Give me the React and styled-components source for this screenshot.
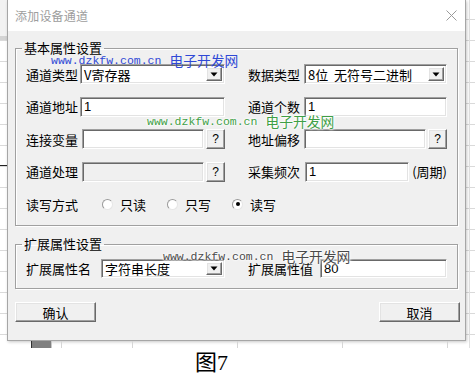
import React from 'react';
import styled, { createGlobalStyle } from 'styled-components';

const GlobalStyle = createGlobalStyle`
  html, body { margin: 0; padding: 0; background: #fff; }
  body { font-family: "Noto Sans CJK SC", "Liberation Sans", sans-serif; color: #000; }
`;

const Page = styled.div`
  width: 475px;
  height: 380px;
  overflow: hidden;
  display: flex;
  flex-direction: column;
`;

// spreadsheet behind the dialog
const Desk = styled.div`
  height: 348px;
  flex: none;
  display: flex;
  flex-direction: column;
  background:
    linear-gradient(#f2f2f2, #f2f2f2) 0 0 / 7px 36px no-repeat,
    linear-gradient(#d4d4d4, #d4d4d4) 0 36px / 7px 4px no-repeat,
    linear-gradient(#222, #222) 0 165px / 7px 1px no-repeat,
    linear-gradient(90deg, transparent 469px, #e0e0e0 469px, #e0e0e0 470px, transparent 470px),
    repeating-linear-gradient(180deg, transparent 0 19px, #dadada 19px 20px, transparent 20px 21px),
    #fff;
`;

const Dialog = styled.div`
  margin-left: 7px;
  width: 459px;
  height: 341px;
  box-sizing: border-box;
  flex: none;
  background: #f0f0f0;
  border: 1px solid #a6a6a6;
  border-top: none;
  box-shadow: 1px 1px 3px rgba(0, 0, 0, 0.22);
  display: flex;
  flex-direction: column;
`;

const TitleBar = styled.div`
  height: 31px;
  flex: none;
  background: #fff;
  display: flex;
  align-items: center;
  justify-content: space-between;
  padding: 0 8px 0 7px;
`;

const Title = styled.span`
  font-size: 12px;
  color: #9d9d9d;
  letter-spacing: 0.2px;
`;

const Body = styled.div`
  position: relative;
  flex: 1;
  padding: 9px 7px 0;
`;

const Group = styled.fieldset`
  margin: ${(p) => p.$top || 0}px 0 0;
  padding: ${(p) => p.$pad};
  min-width: 0;
  border: 1px solid #a0a0a0;
  box-shadow: 1px 1px 0 #fff, inset 1px 1px 0 #fff;
`;

const Legend = styled.legend`
  margin-left: -4px;
  padding: 0 2px;
  font-size: 13px;
  line-height: 16px;
`;

const FieldGrid = styled.div`
  display: grid;
  grid-template-columns: 199px 199px;
  column-gap: 23px;
  row-gap: 12.5px;
  grid-auto-rows: ${(p) => p.$row}px;
`;

const Field = styled.div`
  display: flex;
  align-items: center;
  gap: ${(p) => p.$gap || 0}px;
  grid-column: ${(p) => (p.$wide ? '1 / -1' : 'auto')};
  min-width: 0;
`;

const Label = styled.span`
  width: ${(p) => p.$w}px;
  flex: none;
  font-size: 13px;
  white-space: nowrap;
`;

const Sunken = `
  box-sizing: border-box;
  border: 1px solid;
  border-color: #a0a0a0 #fff #fff #a0a0a0;
  box-shadow: inset 1px 1px 0 #696969, inset -1px -1px 0 #e3e3e3;
`;

const TextBox = styled.input`
  ${Sunken}
  flex: 1;
  min-width: 0;
  height: 100%;
  margin: 0;
  padding: 0 3px;
  font: 13px "Liberation Sans", "Noto Sans CJK SC", sans-serif;
  color: #000;
  background: ${(p) => (p.$disabled ? '#f0f0f0' : '#fff')};
  outline: none;
`;

const Select = styled.div`
  ${Sunken}
  flex: 1;
  height: 100%;
  display: flex;
  align-items: center;
  padding: 2px;
  background: #fff;
`;

const SelectText = styled.span`
  flex: 1;
  font-size: 13px;
  padding-left: 1px;
  white-space: pre;
`;

const Raised = `
  box-sizing: border-box;
  border: 1px solid;
  border-color: #fff #696969 #696969 #fff;
  box-shadow: inset -1px -1px 0 #a0a0a0, inset 1px 1px 0 #e3e3e3;
  background: #f0f0f0;
`;

const DropButton = styled.span`
  ${Raised}
  width: 16px;
  height: 100%;
  flex: none;
  display: flex;
  align-items: center;
  justify-content: center;
`;

const HelpButton = styled.button`
  ${Raised}
  width: 19px;
  height: 100%;
  flex: none;
  margin: 0;
  padding: 0;
  font: 12px "Liberation Sans", sans-serif;
  color: #000;
`;

const Unit = styled.span`
  font-size: 13px;
  white-space: nowrap;
`;

const Radios = styled.div`
  display: flex;
  align-items: center;
  gap: 21px;
  margin-left: 22px;
`;

const RadioItem = styled.label`
  display: flex;
  align-items: center;
  gap: 7px;
  font-size: 13px;
`;

const RadioDot = styled.span`
  width: 11px;
  height: 11px;
  box-sizing: border-box;
  border-radius: 50%;
  border: 1px solid;
  border-color: #9a9a9a #e6e6e6 #e6e6e6 #9a9a9a;
  background: #fff;
  display: flex;
  align-items: center;
  justify-content: center;
  &::after {
    content: '';
    width: 4px;
    height: 4px;
    border-radius: 50%;
    background: ${(p) => (p.$on ? '#000' : 'transparent')};
  }
`;

const ButtonRow = styled.div`
  display: flex;
  justify-content: space-between;
  margin: 13px -2px 0 0;
`;

const DialogButton = styled.button`
  ${Raised}
  width: 81px;
  height: 20px;
  margin: 0;
  padding: 0;
  font: 13px "Noto Sans CJK SC", sans-serif;
  color: #000;
`;

const Watermark = styled.div`
  position: absolute;
  left: ${(p) => p.$x}px;
  top: ${(p) => p.$y}px;
  display: flex;
  align-items: center;
  gap: 8px;
  color: ${(p) => p.$color};
  line-height: 14px;
  white-space: nowrap;
  pointer-events: none;
  text-shadow: ${(p) =>
    p.$halo ? '0 0 2px #fff, 0 0 2px #fff, 0 0 3px #fff, 0 0 4px #fff' : 'none'};
`;

const MarkUrl = styled.span`
  font: 11.5px "Liberation Mono", monospace;
`;

const MarkName = styled.span`
  font-size: 13.8px;
`;

const CellStrip = styled.div`
  flex: 1;
  display: flex;
`;

const Cell = styled.div`
  width: ${(p) => p.$w}px;
  flex: none;
  box-sizing: border-box;
  background: ${(p) => p.$fill || 'transparent'};
  border-right: 1px solid ${(p) => p.$line || '#d6d6d6'};
`;

const Caption = styled.div`
  padding-left: 195px;
  margin-top: 3px;
  font: 22px/24px "Liberation Serif", "Noto Sans CJK SC", serif;
`;

const Triangle = () => (
  <svg width="8" height="5" viewBox="0 0 8 5">
    <polygon points="0.5,0.5 7.5,0.5 4,4.5" fill="#000" />
  </svg>
);

const CloseIcon = () => (
  <svg width="11" height="11" viewBox="0 0 11 11">
    <path d="M0.5 0.5 L10.5 10.5 M10.5 0.5 L0.5 10.5" stroke="#9a9a9a" strokeWidth="1" />
  </svg>
);

const Combo = ({ value }) => (
  <Select>
    <SelectText>{value}</SelectText>
    <DropButton>
      <Triangle />
    </DropButton>
  </Select>
);

const Mark = ({ x, y, color, halo }) => (
  <Watermark $x={x} $y={y} $color={color} $halo={halo}>
    <MarkUrl>www.dzkfw.com.cn</MarkUrl>
    <MarkName>电子开发网</MarkName>
  </Watermark>
);

const cells = [
  { w: 32, line: '#303030' },
  { w: 20, fill: '#808080', line: '#c8c8c8' },
  { w: 10 },
  { w: 71 },
  { w: 105 },
  { w: 105 },
  { w: 105 },
  { w: 27, line: 'transparent' },
];

export default function App() {
  return (
    <Page>
      <GlobalStyle />
      <Desk>
        <Dialog>
          <TitleBar>
            <Title>添加设备通道</Title>
            <CloseIcon />
          </TitleBar>
          <Body>
            <Group $pad="8px 10px 11px">
              <Legend>基本属性设置</Legend>
              <FieldGrid $row={20}>
                <Field>
                  <Label $w={54}>通道类型</Label>
                  <Combo value="V寄存器" />
                </Field>
                <Field>
                  <Label $w={56}>数据类型</Label>
                  <Combo value="8位  无符号二进制" />
                </Field>
                <Field>
                  <Label $w={54}>通道地址</Label>
                  <TextBox value="1" readOnly />
                </Field>
                <Field>
                  <Label $w={56}>通道个数</Label>
                  <TextBox value="1" readOnly />
                </Field>
                <Field $gap={2}>
                  <Label $w={54}>连接变量</Label>
                  <TextBox value="" readOnly />
                  <HelpButton>?</HelpButton>
                </Field>
                <Field $gap={2}>
                  <Label $w={54}>地址偏移</Label>
                  <TextBox value="" readOnly />
                  <HelpButton>?</HelpButton>
                </Field>
                <Field $gap={2}>
                  <Label $w={54}>通道处理</Label>
                  <TextBox value="" readOnly $disabled />
                  <HelpButton>?</HelpButton>
                </Field>
                <Field $gap={3}>
                  <Label $w={54}>采集频次</Label>
                  <TextBox value="1" readOnly />
                  <Unit>(周期)</Unit>
                </Field>
                <Field $wide>
                  <Label $w={54}>读写方式</Label>
                  <Radios>
                    <RadioItem>
                      <RadioDot />
                      只读
                    </RadioItem>
                    <RadioItem>
                      <RadioDot />
                      只写
                    </RadioItem>
                    <RadioItem>
                      <RadioDot $on />
                      读写
                    </RadioItem>
                  </Radios>
                </Field>
              </FieldGrid>
            </Group>

            <Group $top={10} $pad="7px 10px 10px">
              <Legend>扩展属性设置</Legend>
              <FieldGrid $row={19}>
                <Field>
                  <Label $w={75}>扩展属性名</Label>
                  <Combo value="字符串长度" />
                </Field>
                <Field>
                  <Label $w={72}>扩展属性值</Label>
                  <TextBox value="80" readOnly />
                </Field>
              </FieldGrid>
            </Group>

            <ButtonRow>
              <DialogButton>确认</DialogButton>
              <DialogButton>取消</DialogButton>
            </ButtonRow>

            <Mark x={43} y={22} color="#2f49d6" />
            <Mark x={139} y={83} color="#3f9f46" halo />
            <Mark x={155} y={218} color="#4a4a4a" halo />
          </Body>
        </Dialog>
        <CellStrip>
          {cells.map((c, i) => (
            <Cell key={i} $w={c.w} $fill={c.fill} $line={c.line} />
          ))}
        </CellStrip>
      </Desk>
      <Caption>图7</Caption>
    </Page>
  );
}
